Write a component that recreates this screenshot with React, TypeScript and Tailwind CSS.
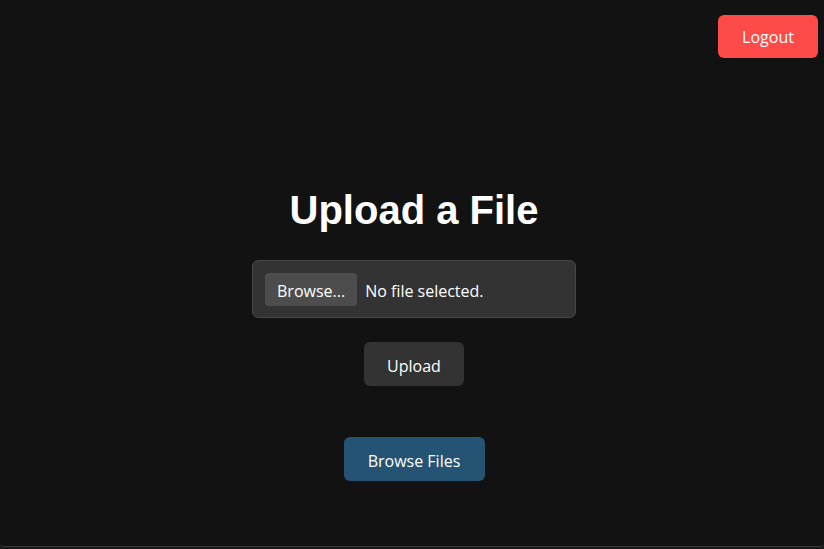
const App = () => {
  return (
    <div className="relative w-full h-[549px] overflow-hidden bg-[#1a1a1a] font-['Open_Sans',sans-serif] text-white">
      <div className="h-[547px] mx-[-3px] rounded-b-lg border-b border-[#383838] bg-[#121212] flex flex-col items-center pt-[187px] pl-[4px]">
        <h1 className="font-['Liberation_Sans',Arial,sans-serif] font-bold text-[40px] leading-[46px] mb-[27px]">
          Upload a File
        </h1>
        <div className="w-[324px] h-[58px] rounded-md border border-[#474747] bg-[#333333] flex items-center px-3 pt-1 gap-2 text-base">
          <span className="h-[33px] px-3 flex items-center rounded bg-[#4d4d4d] -mt-1 pt-1">Browse...</span>
          <span>No file selected.</span>
        </div>
        <button className="mt-6 w-[100px] h-[44px] pt-1 rounded-md bg-[#333333] text-base">Upload</button>
        <button className="mt-[51px] w-[141px] h-[44px] pt-1 rounded-md bg-[#245373] text-base">Browse Files</button>
      </div>
      <button className="absolute top-[15px] right-[6px] w-[100px] h-[43px] rounded-md bg-[#ff4a4a] text-base">
        Logout
      </button>
    </div>
  );
};

export default App;
